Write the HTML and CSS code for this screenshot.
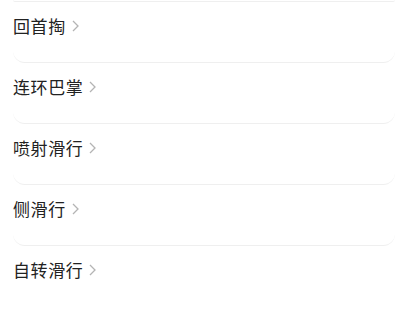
FILE: index.html
```html
<!DOCTYPE html>
<html lang="zh">
<head>
<meta charset="utf-8">
<link rel="stylesheet" href="styles.css">
</head>
<body>
<div class="list">
  <div class="card stub"></div>
  <div class="card"><span class="label">回首掏</span><svg class="chev" viewBox="0 0 7 12" width="7" height="12"><polyline points="1,1 6,6 1,11"/></svg></div>
  <div class="card"><span class="label">连环巴掌</span><svg class="chev" viewBox="0 0 7 12" width="7" height="12"><polyline points="1,1 6,6 1,11"/></svg></div>
  <div class="card"><span class="label">喷射滑行</span><svg class="chev" viewBox="0 0 7 12" width="7" height="12"><polyline points="1,1 6,6 1,11"/></svg></div>
  <div class="card"><span class="label">侧滑行</span><svg class="chev" viewBox="0 0 7 12" width="7" height="12"><polyline points="1,1 6,6 1,11"/></svg></div>
  <div class="card last"><span class="label">自转滑行</span><svg class="chev" viewBox="0 0 7 12" width="7" height="12"><polyline points="1,1 6,6 1,11"/></svg></div>
</div>
</body>
</html>
```
FILE: styles.css
```css
html, body {
  margin: 0;
  padding: 0;
  background: #fff;
}
body {
  font-family: "Noto Sans CJK SC", "Noto Sans", sans-serif;
  color: #222;
  overflow: hidden;
}
.list {
  display: flex;
  flex-direction: column;
  padding: 0 16px 0 13px;
}
.card {
  box-sizing: border-box;
  height: 61px;
  padding-top: 12px;
  display: flex;
  align-items: flex-start;
  border-bottom: 1px solid #efefef;
  border-radius: 0 0 12px 12px;
  background: #fff;
}
.stub {
  height: 2px;
  margin-top: 0;
  padding: 0;
}
.last {
  border-bottom-color: transparent;
}
.label {
  font-size: 17px;
  line-height: 24px;
  letter-spacing: 0.6px;
}
.chev {
  margin-left: 6px;
  margin-top: 6px;
  fill: none;
  stroke: #b4b4b4;
  stroke-width: 1.3;
}
```
